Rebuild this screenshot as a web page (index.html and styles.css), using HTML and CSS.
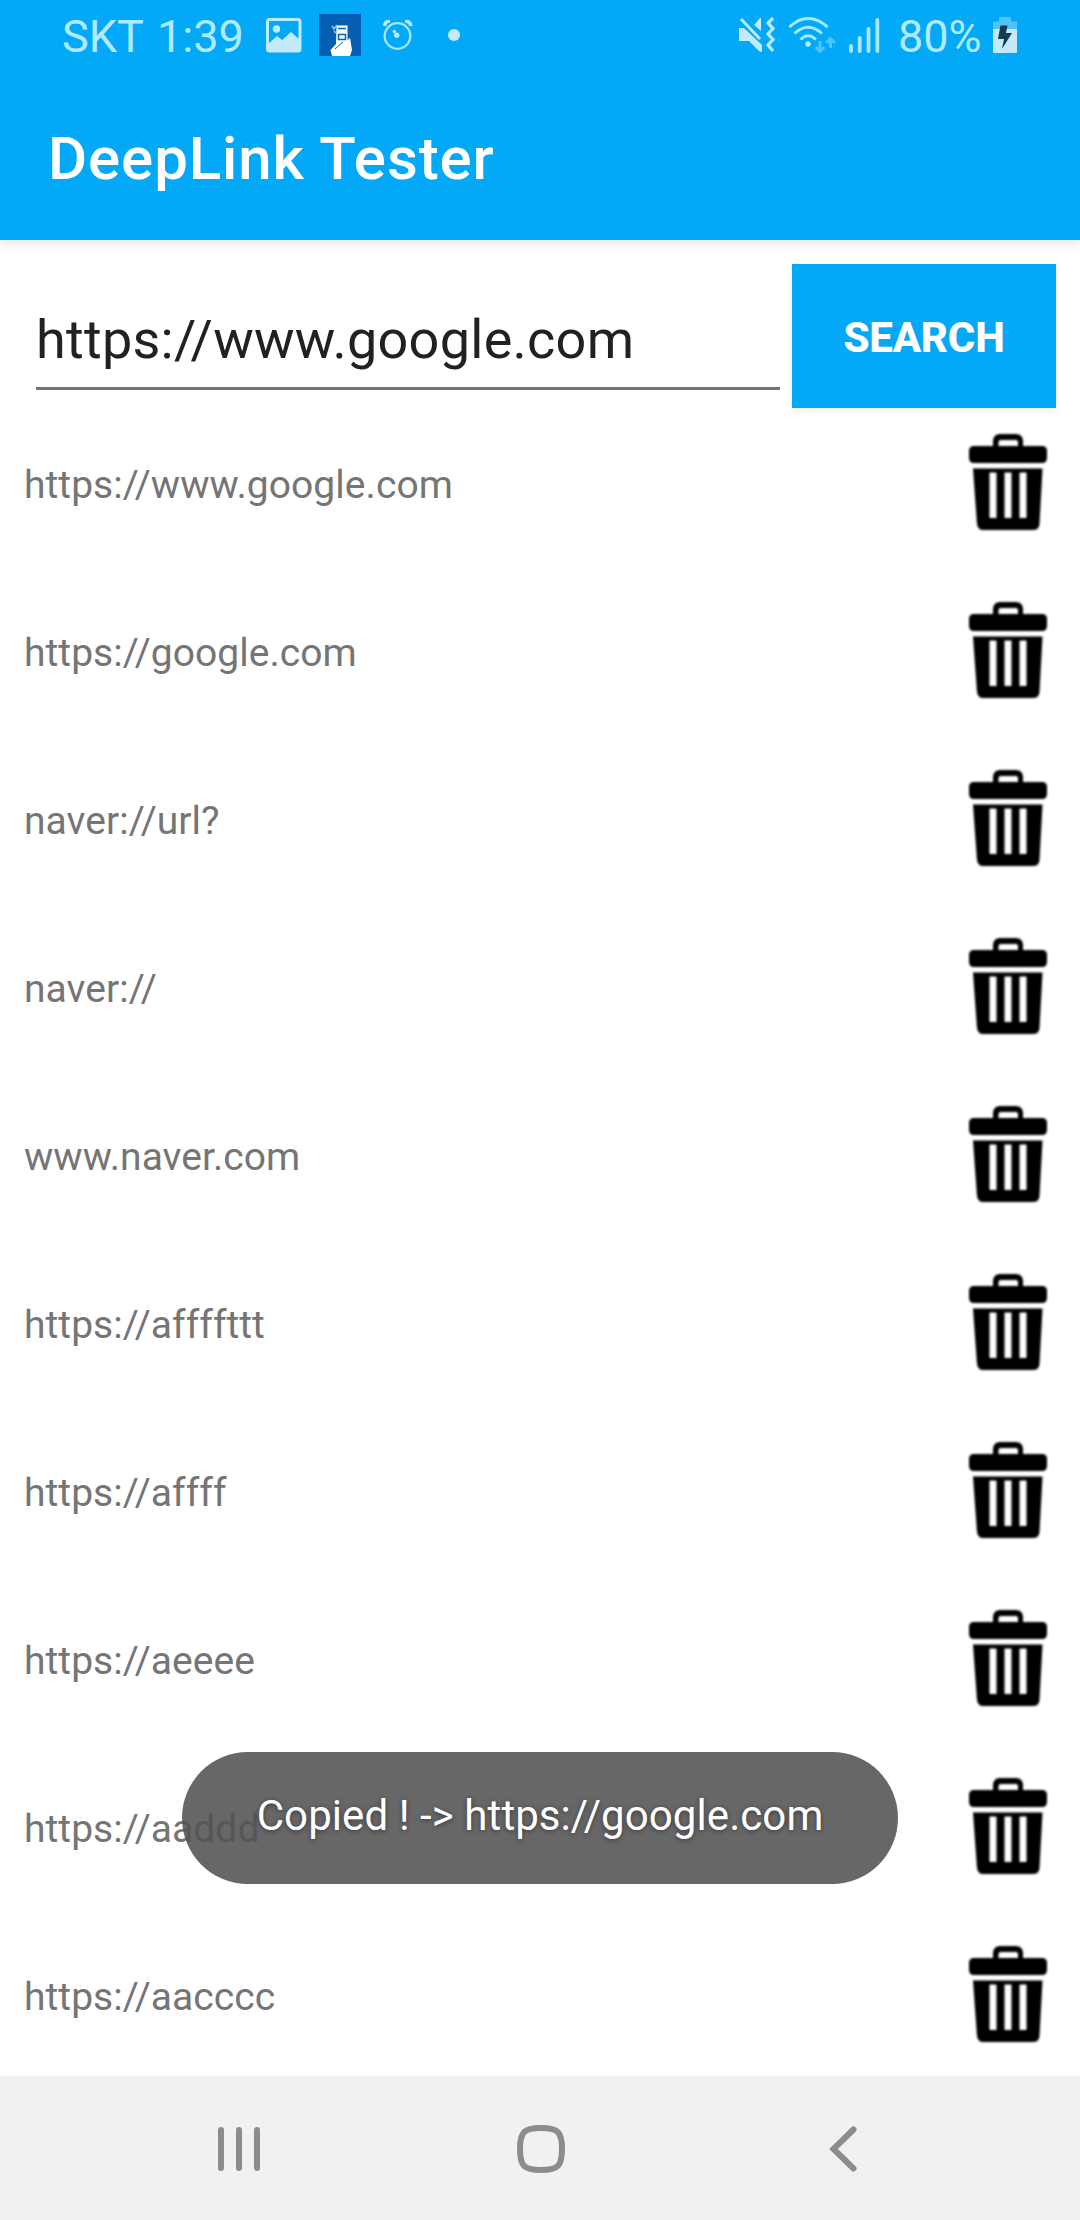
FILE: index.html
```html
<!DOCTYPE html>
<html lang="en">
<head>
    <meta charset="UTF-8">
    <meta name="viewport" content="width=device-width, initial-scale=1.0">
    <title>DeepLink Tester</title>
    <link rel="stylesheet" href="styles.css">
</head>
<body>
    <svg class="defs" width="0" height="0">
        <symbol id="trash" viewBox="0 0 96 96">
            <path fill="#000" fill-rule="evenodd" d="M33 12V6Q34 0 40 0H56Q62 0 63 6V12H82Q87 12 87 17V24Q87 29 82 29H14Q9 29 9 24V17Q9 12 14 12ZM38.500 12H58V8Q58 6 56 6H41Q38.500 6 38.500 8Z"/>
            <path fill="#000" fill-rule="evenodd" d="M13 34.500H82.500L79.500 90Q79 96 73 96H23Q18 96 17 90ZM29.500 38.500V84H36.500V38.500ZM44.500 38.500V84H51.500V38.500ZM59.500 38.500V84H66.500V38.500Z"/>
        </symbol>
    </svg>

    <header class="header">
        <div class="status-bar">
            <div class="status-left">
                <span class="carrier">SKT</span>
                <span class="clock">1:39</span>
                <svg class="icon-gallery" width="36" height="36" viewBox="0 0 36 36">
                    <rect x="1.500" y="1.500" width="32.500" height="31.500" rx="2" fill="none" stroke="#b9ebff" stroke-width="3"/>
                    <circle cx="10.500" cy="11" r="3.700" fill="#c4e9fc"/>
                    <path d="M2 26L11 18L16 22L25 14L34 22V33H2Z" fill="#c4e9fc"/>
                </svg>
                <svg class="icon-app" width="42" height="42" viewBox="0 0 42 42">
                    <rect width="42" height="42" fill="#0560b5"/>
                    <path d="M17.500 11.500H28.500V26L31 24L33 36L31 42H13L11.500 36L17 30Z" fill="#fff"/>
                    <path d="M19 14.500H27M19.500 20.500H26.500V25.500H19.500Z" fill="none" stroke="#0560b5" stroke-width="1.500"/>
                    <path d="M13 12L15 15L18 11M15 17L17 19" fill="none" stroke="#9cc8ec" stroke-width="1.500"/>
                    <path d="M16 35L24 28" stroke="#0560b5"/>
                </svg>
                <svg class="icon-alarm" width="30" height="32" viewBox="0 0 30 32">
                    <path d="M1.500 6Q2 1 7 1M28 6Q27 1 22 1" fill="none" stroke="#b9ebff" stroke-width="3.500"/>
                    <circle cx="14.500" cy="16" r="12.800" fill="none" stroke="#a5e6ff" stroke-width="2.300"/>
                    <circle cx="13.700" cy="15.300" r="2.700" fill="#b9ebff"/>
                    <circle cx="11.300" cy="11.500" r="1.700" fill="#b9ebff"/>
                </svg>
                <span class="dot"></span>
            </div>
            <div class="status-right">
                <svg class="icon-mute" width="36" height="38" viewBox="0 0 36 38">
                    <path d="M0 12H5L23 29V35Q22 37 20 35L10 25H0Z" fill="#c4e9fc"/>
                    <path d="M2 3L21 23" stroke="#b9ebff" stroke-width="3"/>
                    <path d="M15 9L21 2Q22 1 22 3V15Z" fill="#c4e9fc"/>
                    <path d="M34 2L29 7L34 12.500L29 18L34 23.500L29 29L34 35" fill="none" stroke="#b9ebff" stroke-width="3.200"/>
                </svg>
                <svg class="icon-wifi" width="48" height="38" viewBox="0 0 48 38">
                    <path d="M1.500 10Q20 -7 39.500 10M6.500 16.500Q20 4 34 16.500M12.500 22.500Q20 15 28 22.500" fill="none" stroke="#a5e9ff" stroke-width="3"/>
                    <circle cx="20" cy="27" r="2.700" fill="#b9ebff"/>
                    <path d="M32 24V34M27.500 30L32 34.500L36.500 30M42.500 31V22M38 26L42.500 21.500L47 26" fill="none" stroke="#4fc3fa" stroke-width="3"/>
                </svg>
                <svg class="icon-signal" width="31" height="36" viewBox="0 0 31 36">
                    <path d="M2 28V33M10.700 20V33M19.500 11V33M28.300 2V33" stroke="#a8e8ff" stroke-width="3.800" stroke-linecap="round"/>
                </svg>
                <span class="battery-text">80%</span>
                <svg class="icon-battery" width="24" height="36" viewBox="0 0 24 36">
                    <path d="M6 0H18V4.500H24V12H0V4.500H6Z" fill="#50c2f8"/>
                    <path d="M0 12H24V35Q24 36 23 36H1Q0 36 0 35Z" fill="#c4e9fc"/>
                    <path d="M7.500 8.500H14.500L13 16H19L9 32L11 22H5Z" fill="#163a50"/>
                </svg>
            </div>
        </div>
        <h1>DeepLink Tester</h1>
    </header>

    <main class="content">
        <form class="search-form">
            <input type="text" class="url-input" value="https://www.google.com">
            <button type="button" class="search-button">SEARCH</button>
        </form>
        <ul class="link-list">
            <li><span>https://www.google.com</span><svg class="trash"><use href="#trash"/></svg></li>
            <li><span>https://google.com</span><svg class="trash"><use href="#trash"/></svg></li>
            <li><span>naver://url?</span><svg class="trash"><use href="#trash"/></svg></li>
            <li><span>naver://</span><svg class="trash"><use href="#trash"/></svg></li>
            <li><span>www.naver.com</span><svg class="trash"><use href="#trash"/></svg></li>
            <li><span>https://affffttt</span><svg class="trash"><use href="#trash"/></svg></li>
            <li><span>https://affff</span><svg class="trash"><use href="#trash"/></svg></li>
            <li><span>https://aeeee</span><svg class="trash"><use href="#trash"/></svg></li>
            <li><span>https://aaddd</span><svg class="trash"><use href="#trash"/></svg></li>
            <li><span>https://aacccc</span><svg class="trash"><use href="#trash"/></svg></li>
        </ul>
    </main>

    <div class="toast">Copied ! -&gt; https://google.com</div>

    <nav class="nav-bar">
        <svg width="300" height="144" viewBox="0 0 300 144">
            <path d="M131 54V92M149 54V92M167 54V92" stroke="#8c8c8c" stroke-width="6" stroke-linecap="round"/>
        </svg>
        <svg width="300" height="144" viewBox="0 0 300 144">
            <path d="M151 52C168 52 172 56 172 73S168 94 151 94S130 90 130 73S134 52 151 52Z" fill="none" stroke="#8c8c8c" stroke-width="6"/>
        </svg>
        <svg width="300" height="144" viewBox="0 0 300 144">
            <path d="M163.500 53.500L143.500 73L163.500 92.500" fill="none" stroke="#8c8c8c" stroke-width="6" stroke-linecap="round"/>
        </svg>
    </nav>
</body>
</html>
```
FILE: styles.css
```css
* {
    box-sizing: border-box;
}
body {
    font-family: Roboto, sans-serif;
    background-color: #fff;
    margin: 0;
    width: 1080px;
    height: 2220px;
    display: flex;
    flex-direction: column;
    overflow: hidden;
    position: relative;
}
.defs {
    position: absolute;
}
.header {
    background-color: #03a9f6;
    height: 240px;
    flex: none;
    box-shadow: 0 3px 12px rgba(0, 0, 0, 0.12);
}
.status-bar {
    height: 72px;
    padding: 0 63px 0 62px;
    display: flex;
    justify-content: space-between;
    color: #b0eaff;
    font-size: 45px;
    line-height: 74px;
}
.status-left,
.status-right {
    display: flex;
    align-items: flex-start;
}
.carrier {
    width: 95px;
}
.clock {
    width: 109px;
}
.icon-gallery {
    margin-top: 18px;
}
.icon-app {
    margin: 14px 22px 0 17px;
}
.icon-alarm {
    margin-top: 20px;
}
.dot {
    width: 12px;
    height: 12px;
    border-radius: 50%;
    background-color: #c4e9fc;
    margin: 29px 0 0 35px;
}
.icon-mute {
    margin-top: 16px;
}
.icon-wifi {
    margin: 17px 13px 0 13px;
}
.icon-signal {
    margin-top: 18px;
}
.battery-text {
    width: 95px;
    margin-left: 18px;
}
.icon-battery {
    margin-top: 17px;
}
h1 {
    margin: 0;
    padding-left: 48px;
    color: #fff;
    font-size: 60px;
    font-weight: 500;
    line-height: 173px;
    letter-spacing: 0.9px;
}
.content {
    flex: 1;
    min-height: 0;
    overflow: hidden;
    padding: 24px 24px 0;
}
.search-form {
    display: flex;
    height: 144px;
}
.url-input {
    width: 744px;
    height: 99px;
    margin: 27px 12px 0;
    padding: 1px 0 0;
    border: none;
    border-bottom: 3px solid #757575;
    background: none;
    color: #212121;
    font-family: inherit;
    font-size: 54px;
    letter-spacing: 0.27px;
    outline: none;
}
.search-button {
    width: 264px;
    height: 144px;
    padding: 2px 0 0;
    border: none;
    background-color: #03a9f6;
    box-shadow: 0 3px 6px rgba(0, 0, 0, 0.07);
    color: #fff;
    font-family: inherit;
    font-size: 42px;
    font-weight: 800;
    letter-spacing: -0.2px;
}
.link-list {
    list-style: none;
    margin: 0;
    padding: 0;
}
.link-list li {
    display: flex;
    justify-content: space-between;
    height: 168px;
    padding-top: 26px;
    color: #757575;
    font-size: 39px;
    line-height: 102px;
    letter-spacing: 0.05px;
}
.trash {
    width: 96px;
    height: 96px;
    filter: blur(0.8px);
}
.toast {
    position: absolute;
    left: 182px;
    top: 1752px;
    width: 716px;
    height: 132px;
    border-radius: 66px;
    background-color: rgba(82, 82, 82, 0.88);
    color: #fff;
    font-size: 42px;
    line-height: 128px;
    letter-spacing: 0.08px;
    text-align: center;
    text-shadow: 0 1px 5px rgba(0, 0, 0, 0.45);
}
.nav-bar {
    flex: none;
    display: flex;
    justify-content: center;
    height: 144px;
    background-color: #f1f1f1;
}
```
